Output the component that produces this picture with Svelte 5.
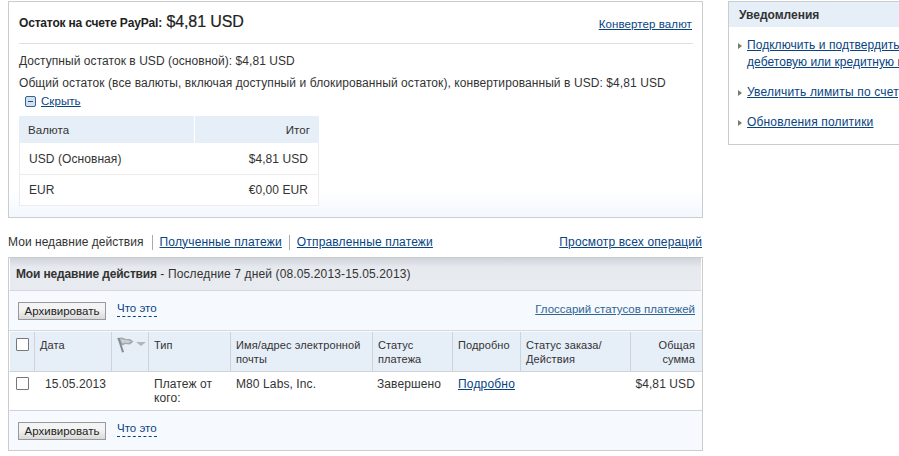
<script>
  const columns = [
    { label: 'Дата', cls: 'c-date' },
    { label: 'Тип', cls: 'c-type' },
    { label: 'Имя/адрес электронной почты', cls: 'c-name' },
    { label: 'Статус платежа', cls: 'c-status' },
    { label: 'Подробно', cls: 'c-det' },
    { label: 'Статус заказа/ Действия', cls: 'c-order' },
    { label: 'Общая сумма', cls: 'c-sum' }
  ];
</script>

<div class="page">
  <main class="left">
    <section class="balance">
      <div class="bal-head">
        <h1><span class="bal-label">Остаток на счете PayPal:</span> <span class="bal-amt">$4,81 USD</span></h1>
        <a href="#c" class="conv">Конвертер валют</a>
      </div>
      <p class="l1">Доступный остаток в USD (основной): $4,81 USD</p>
      <p class="l2">Общий остаток (все валюты, включая доступный и блокированный остаток), конвертированный в USD: $4,81 USD</p>
      <div class="hide">
        <svg width="11" height="11" viewBox="0 0 11 11"><rect x="0.5" y="0.5" width="10" height="10" rx="1.5" fill="#d5e0ee" stroke="#2f6496"/><rect x="3" y="5" width="5" height="1" fill="#1d4f7f"/></svg>
        <a href="#h">Скрыть</a>
      </div>
      <div class="cur">
        <div class="cur-h"><div class="ch1">Валюта</div><div class="ch2">Итог</div></div>
        <div class="cur-r"><span>USD (Основная)</span><span>$4,81 USD</span></div>
        <div class="cur-r last"><span>EUR</span><span>€0,00 EUR</span></div>
      </div>
    </section>

    <nav class="tabs">
      <span class="tab first">Мои недавние действия</span>
      <a href="#a" class="tab">Полученные платежи</a>
      <a href="#b" class="tab">Отправленные платежи</a>
      <a href="#all" class="all">Просмотр всех операций</a>
    </nav>

    <section class="recent">
      <div class="rec-head"><b>Мои недавние действия</b> - Последние 7 дней (08.05.2013-15.05.2013)</div>
      <div class="bar">
        <button>Архивировать</button>
        <a href="#w" class="what">Что это</a>
        <a href="#g" class="gloss">Глоссарий статусов платежей</a>
      </div>
      <div class="grid head">
        <div class="cell c-chk"><span class="box"></span></div>
        <div class="cell {columns[0].cls}">{columns[0].label}</div>
        <div class="cell c-flag">
          <svg width="30" height="16" viewBox="0 0 30 16">
            <path d="M0 1 L5 0.5 L9 2 L13 2 L16.5 4.5 L13 7.5 L8 7 L6 8.5 L3.5 7 Z" fill="#a4a9ac"/>
            <path d="M3 2 L8 3 L12 3.5 L14 4.5 L11 6 L8 5.5 L5.5 6.5 Z" fill="#cdd1d3"/>
            <path d="M0.5 1 L2.5 1 L7 15 L5 15.5 Z" fill="#858c90"/>
            <path d="M19 5 H29 L24 9 Z" fill="#b0b6bc"/>
          </svg>
        </div>
        {#each columns.slice(1) as c}
          <div class="cell {c.cls}">{c.label}</div>
        {/each}
      </div>
      <div class="grid row">
        <div class="cell c-chk"><span class="box"></span></div>
        <div class="cell c-date v">15.05.2013</div>
        <div class="cell c-flag"></div>
        <div class="cell c-type">Платеж от кого:</div>
        <div class="cell c-name">M80 Labs, Inc.</div>
        <div class="cell c-status">Завершено</div>
        <div class="cell c-det"><a href="#d">Подробно</a></div>
        <div class="cell c-order"></div>
        <div class="cell c-sum">$4,81 USD</div>
      </div>
      <div class="bar bottom">
        <button>Архивировать</button>
        <a href="#w" class="what">Что это</a>
      </div>
    </section>
  </main>

  <aside class="notes">
    <h2>Уведомления</h2>
    <ul>
      <li><a href="#1">Подключить и подтвердить<br />дебетовую или кредитную карту</a></li>
      <li><a href="#2">Увеличить лимиты по счету</a></li>
      <li><a href="#3">Обновления политики</a></li>
    </ul>
  </aside>
</div>

<style>
  :global(body) { margin: 0; background: #fff; }
  .page {
    width: 899px; height: 456px; overflow: hidden; display: flex; align-items: flex-start;
    padding: 1px 0 0 8px; box-sizing: border-box;
    font: 12px/16px "Liberation Sans", Arial, sans-serif; color: #333; letter-spacing: 0.07px;
  }
  a { color: #084482; text-decoration: underline; }
  .left { width: 695px; flex: none; }
  p, h1, h2, ul { margin: 0; padding: 0; }

  .balance {
    box-sizing: border-box; height: 217px; border: 1px solid #c9cdd0; padding: 0 9px 0 10px;
    background: linear-gradient(#fff 187px, #f3f8fe 100%);
  }
  .bal-head { display: flex; justify-content: space-between; height: 41px; border-bottom: 1px solid #e0e0e0; }
  h1 { font-size: 12px; font-weight: normal; padding-top: 10px; line-height: 20px; color: #222; }
  .bal-label { font-weight: bold; letter-spacing: -0.18px; }
  .bal-amt { font-size: 16px; letter-spacing: -0.1px; -webkit-text-stroke: 0.2px #222; margin-left: 1px; }
  .conv { margin: 15px 1px 0 0; font-size: 11.5px; line-height: 14px; height: 14px; letter-spacing: .1px; }
  .l1 { margin-top: 9px; letter-spacing: .05px; }
  .l2 { margin-top: 6px; letter-spacing: .08px; }
  .hide { display: flex; align-items: center; gap: 5px; margin: 2px 0 0 6px; height: 16px; }
  .hide a { font-size: 11.5px; }
  .cur { width: 300px; margin-top: 7px; border: 1px solid #ececec; border-top: 0; box-sizing: border-box; }
  .cur-h { display: flex; height: 27px; margin: 0 -1px; font-size: 11.5px; line-height: 28px; }
  .ch1 { background: #e6eef8; width: 176px; padding-left: 9px; box-sizing: border-box; border-right: 1px solid #fff; }
  .ch2 { background: #e6eef8; flex: 1; text-align: right; padding-right: 9px; }
  .cur-r { display: flex; justify-content: space-between; height: 31px; line-height: 32px; padding: 0 10px 0 9px; border-bottom: 1px solid #ececec; background: #fff; }
  .cur-r.last { border-bottom: 0; height: 30px; line-height: 30px; }

  .tabs { display: flex; align-items: center; height: 16px; margin-top: 16px; letter-spacing: 0.16px; }
  .tab { padding: 0 7px; border-left: 1px solid #aaa; line-height: 15px; }
  .tab.first { padding: 0 8px 0 0; border-left: 0; letter-spacing: .04px; }
  .all { margin-left: auto; margin-right: 1px; letter-spacing: .14px; }

  .recent { box-sizing: border-box; height: 194px; margin-top: 7px; border: 1px solid #cccccc; background: #f6faff; }
  .rec-head {
    height: 33px; line-height: 32px; padding-left: 6px; border: 1px solid #fff; border-bottom: 1px solid #d5d8dc; border-top: 0; box-sizing: border-box;
    background: linear-gradient(#cfd4db, #e6e9ee 9px, #e8ebf0); letter-spacing: 0.13px;
  }
  .rec-head b { letter-spacing: -0.16px; }
  .bar { position: relative; display: flex; align-items: flex-start; height: 40px; padding: 11px 0 0 9px; box-sizing: border-box; border-bottom: 1px solid #d5d8dc; }
  .bar.bottom { border-bottom: 0; height: 39px; }
  button {
    width: 88px; height: 18px; padding: 0; font: 11.5px/14px "Liberation Sans", Arial, sans-serif; letter-spacing: 0; color: #222;
    border: 1px solid #999; border-radius: 0; background: linear-gradient(#f4f4f4 40%, #d9d9d9);
  }
  .what { margin: -2px 0 0 11px; font-size: 11.5px; line-height: 16px; text-decoration: none; border-bottom: 1px dashed #084482; height: 16px; letter-spacing: 0; }
  .gloss { margin: 0 7px 0 auto; font-size: 11.5px; color: #2f6496; line-height: 14px; letter-spacing: 0; }

  .grid { display: grid; grid-template-columns: 25px 77px 37px 82px 142px 80px 68px 110px 71px; box-sizing: border-box; border-left: 1px solid #fff; }
  .head { background: #e6eef8; height: 40px; margin-top: 1px; border-bottom: 1px solid #cfd3d8; font-size: 11px; line-height: 14px; letter-spacing: .1px; }
  .head .cell { border-right: 1px solid #cfd3d8; padding: 6px 4px 0 5px; box-sizing: border-box; }
  .head .cell:last-child { border-right: 0; text-align: right; padding-right: 7px; }
  .head .c-chk { padding: 6px 0 0 6px; }
  .head .c-flag { padding: 5px 0 0 5px; overflow: hidden; }
  .head svg { display: block; }
  .row { background: #fff; height: 39px; border-bottom: 1px solid #cfd3d8; line-height: 14px; letter-spacing: .1px; }
  .row .cell { padding: 5px 4px 0 5px; box-sizing: border-box; }
  .row .c-chk { padding-left: 6px; }
  .row .c-date { padding-left: 10px; }
  .row .c-status { padding-left: 4px; }
  .row .c-sum { text-align: right; padding: 5px 7px 0 0; white-space: nowrap; }
  .row a { letter-spacing: .18px; }
  .box { display: block; width: 11px; height: 11px; border: 1px solid #777; background: #fff; border-radius: 1px; }

  .notes { flex: none; width: 300px; height: 144px; margin-left: 25px; box-sizing: border-box; border: 1px solid #c9cdd0; }
  h2 { font-size: 12px; line-height: 26px; height: 25px; background: #e6eef8; padding-left: 10px; color: #333; letter-spacing: 0; }
  ul { list-style: none; padding: 10px 0 0 18px; }
  li { position: relative; line-height: 17px; margin-bottom: 13px; letter-spacing: .05px; }
  li:nth-child(n+2) { letter-spacing: .17px; }
  li::before { content: ""; position: absolute; left: -9px; top: 6px; width: 0; height: 0; border-left: 4px solid #777c6c; border-top: 3px solid transparent; border-bottom: 3px solid transparent; }
</style>
